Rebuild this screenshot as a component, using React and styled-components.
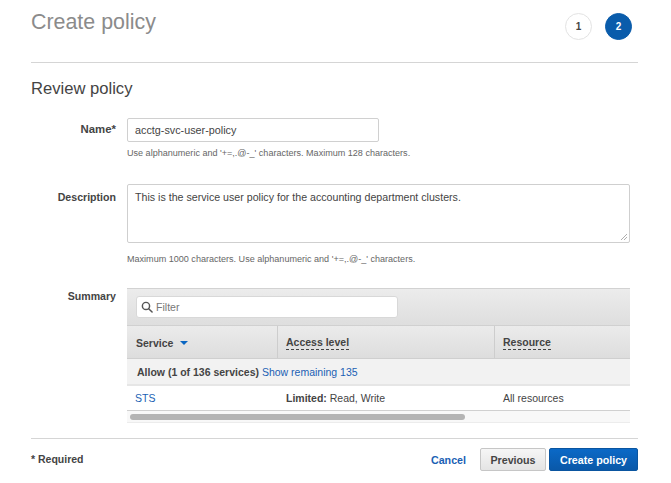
import React from 'react';
import styled, { createGlobalStyle } from 'styled-components';

const GlobalStyle = createGlobalStyle`
  html, body {
    margin: 0;
    background: #fff;
    overflow: hidden;
  }
  body {
    font-family: "Liberation Sans", Arial, sans-serif;
    color: #444;
  }
`;

const Page = styled.div`
  width: 607px;
  height: 483px;
  padding-left: 31px;
`;

const Header = styled.div`
  height: 62px;
  display: flex;
  justify-content: space-between;
  border-bottom: 1px solid #d5d5d5;
`;

const Title = styled.h1`
  margin: 9px 0 0;
  font-size: 21.4px;
  line-height: 26px;
  font-weight: 400;
  color: #8b8b8b;
`;

const Steps = styled.div`
  display: flex;
  gap: 13px;
  margin: 13px 6px 0 0;
`;

const Step = styled.div`
  width: 27px;
  height: 27px;
  box-sizing: border-box;
  border-radius: 50%;
  display: flex;
  align-items: center;
  justify-content: center;
  font-size: 10px;
  font-weight: 700;
  border: 1px solid ${p => (p.$active ? '#0a5cab' : '#e3e3e3')};
  background: ${p => (p.$active ? '#0a5cab' : '#fff')};
  color: ${p => (p.$active ? '#fff' : '#444')};
`;

const Heading = styled.h2`
  margin: 16px 0 0;
  font-size: 16.6px;
  line-height: 20px;
  font-weight: 400;
  color: #444;
`;

const Field = styled.div`
  display: grid;
  grid-template-columns: 86px 503px;
  column-gap: 10px;
  margin-top: ${p => p.$top}px;
`;

const Label = styled.div`
  text-align: right;
  font-size: ${p => p.$size || 10.6}px;
  font-weight: 700;
  color: #444;
  padding: ${p => p.$top}px 1px 0 0;
`;

const NameInput = styled.div`
  width: 252px;
  height: 24px;
  box-sizing: border-box;
  border: 1px solid #d0d0d0;
  border-radius: 2px;
  padding-left: 7px;
  font-size: 10.8px;
  line-height: 22px;
  color: #444;
`;

const TextArea = styled.div`
  position: relative;
  height: 59px;
  box-sizing: border-box;
  border: 1px solid #cfcfcf;
  border-radius: 2px;
  padding: 1px 7px;
  font-size: 10.65px;
  line-height: 22px;
  color: #444;
`;

const Grip = styled.svg`
  position: absolute;
  right: 1px;
  bottom: 1px;
`;

const Hint = styled.div`
  margin-top: ${p => p.$top}px;
  font-size: 9.06px;
  line-height: 12px;
  color: #666;
`;

const Panel = styled.div`
  width: 503px;
  overflow: hidden;
`;

const FilterBar = styled.div`
  height: 38px;
  box-sizing: border-box;
  border-top: 1px solid #d2d2d2;
  border-bottom: 1px solid #d0d0d0;
  background: linear-gradient(#ececec, #dedede);
  padding: 7px 0 0 9px;
`;

const FilterBox = styled.div`
  width: 262px;
  height: 22px;
  box-sizing: border-box;
  border: 1px solid #d8d8d8;
  border-radius: 3px;
  background: #fff;
  display: flex;
  align-items: center;
  gap: 3px;
  padding-left: 4px;
  font-size: 10.6px;
  color: #777;
`;

const Columns = styled.div`
  display: grid;
  grid-template-columns: 150px 217px 136px;
`;

const HeadRow = styled(Columns)`
  height: 33px;
  box-sizing: border-box;
  border-bottom: 1px solid #cfcfcf;
  background: linear-gradient(#ebebeb, #dddddd);
`;

const HeadCell = styled.div`
  display: flex;
  align-items: center;
  gap: 6px;
  padding: 2px 0 0 ${p => p.$pad}px;
  font-size: 10.5px;
  font-weight: 700;
  color: #444;
  border-left: ${p => (p.$divider ? '1px solid #cdcdcd' : 'none')};
`;

const Dashed = styled.span`
  border-bottom: 1px dashed #444;
  padding-bottom: 1px;
`;

const SortArrow = styled.span`
  width: 0;
  height: 0;
  margin-left: 1px;
  border-left: 4px solid transparent;
  border-right: 4px solid transparent;
  border-top: 4px solid #0a66c2;
`;

const GroupRow = styled.div`
  height: 27px;
  box-sizing: border-box;
  border-bottom: 2px solid #e6e6e6;
  background: #f2f2f2;
  padding-left: 10px;
  font-size: 10.5px;
  line-height: 26px;
  white-space: nowrap;
`;

const Strong = styled.strong`
  font-weight: 700;
  color: #444;
`;

const Link = styled.span`
  color: #1a5fb4;
  font-weight: ${p => (p.$bold ? 700 : 400)};
`;

const DataRow = styled(Columns)`
  height: 25px;
  box-sizing: border-box;
  border-bottom: 1px solid #d0d0d0;
  font-size: 10.5px;
  line-height: 24px;
  color: #444;
`;

const DataCell = styled.div`
  padding-left: ${p => p.$pad}px;
`;

const ScrollTrack = styled.div`
  height: 12px;
  box-sizing: border-box;
  border-bottom: 1px solid #ececec;
  background: #f8f8f8;
  padding: 3px 0 0 3px;
`;

const ScrollThumb = styled.div`
  width: 335px;
  height: 6px;
  border-radius: 3px;
  background: #b4b4b4;
`;

const Footer = styled.div`
  margin-top: 15px;
  height: 34px;
  box-sizing: border-box;
  border-top: 1px solid #d5d5d5;
  padding-top: 9px;
  display: flex;
  align-items: flex-start;
  justify-content: space-between;
`;

const Required = styled.div`
  font-size: 10.5px;
  line-height: 23px;
  font-weight: 700;
  color: #444;
`;

const Actions = styled.div`
  display: flex;
  align-items: center;
  font-size: 10.7px;
  font-weight: 700;
`;

const Cancel = styled(Link)`
  margin-right: 14px;
`;

const Button = styled.div`
  height: 23px;
  box-sizing: border-box;
  width: ${p => p.$width}px;
  margin-left: ${p => p.$gap}px;
  border-radius: 2px;
  display: flex;
  align-items: center;
  justify-content: center;
  border: 1px solid ${p => (p.$primary ? '#0a55a0' : '#c6c6c6')};
  background: ${p => (p.$primary ? 'linear-gradient(#0b69c7, #0a58a8)' : 'linear-gradient(#f6f6f6, #e4e4e4)')};
  color: ${p => (p.$primary ? '#fff' : '#444')};
`;

function SearchIcon() {
  return (
    <svg width="12" height="12" viewBox="0 0 13 13" fill="none" stroke="#555" strokeWidth="1.6">
      <circle cx="5.4" cy="5.4" r="3.9" />
      <path d="M8.3 8.3 L12 12" strokeLinecap="round" />
    </svg>
  );
}

function App() {
  return (
    <Page>
      <GlobalStyle />
      <Header>
        <Title>Create policy</Title>
        <Steps>
          <Step>1</Step>
          <Step $active>2</Step>
        </Steps>
      </Header>

      <Heading>Review policy</Heading>

      <Field $top={19}>
        <Label $top={5} $size={11.4}>Name*</Label>
        <div>
          <NameInput>acctg-svc-user-policy</NameInput>
          <Hint $top={5}>Use alphanumeric and '+=,.@-_' characters. Maximum 128 characters.</Hint>
        </div>
      </Field>

      <Field $top={25}>
        <Label $top={7}>Description</Label>
        <div>
          <TextArea>
            This is the service user policy for the accounting department clusters.
            <Grip width="8" height="8" viewBox="0 0 8 8" stroke="#999" strokeWidth="0.8">
              <path d="M1 7 L7 1 M4 7 L7 4" />
            </Grip>
          </TextArea>
          <Hint $top={10}>Maximum 1000 characters. Use alphanumeric and '+=,.@-_' characters.</Hint>
        </div>
      </Field>

      <Field $top={23}>
        <Label $top={2}>Summary</Label>
        <Panel>
          <FilterBar>
            <FilterBox>
              <SearchIcon />
              Filter
            </FilterBox>
          </FilterBar>
          <HeadRow>
            <HeadCell $pad={9}>
              Service <SortArrow />
            </HeadCell>
            <HeadCell $pad={8} $divider>
              <Dashed>Access level</Dashed>
            </HeadCell>
            <HeadCell $pad={8} $divider>
              <Dashed>Resource</Dashed>
            </HeadCell>
          </HeadRow>
          <GroupRow>
            <Strong>Allow (1 of 136 services)</Strong> <Link>Show remaining 135</Link>
          </GroupRow>
          <DataRow>
            <DataCell $pad={8}>
              <Link>STS</Link>
            </DataCell>
            <DataCell $pad={9}>
              <Strong>Limited:</Strong> Read, Write
            </DataCell>
            <DataCell $pad={9}>All resources</DataCell>
          </DataRow>
          <ScrollTrack>
            <ScrollThumb />
          </ScrollTrack>
        </Panel>
      </Field>

      <Footer>
        <Required>* Required</Required>
        <Actions>
          <Cancel $bold>Cancel</Cancel>
          <Button $width={66}>Previous</Button>
          <Button $primary $width={89} $gap={3}>Create policy</Button>
        </Actions>
      </Footer>
    </Page>
  );
}

export default App;
